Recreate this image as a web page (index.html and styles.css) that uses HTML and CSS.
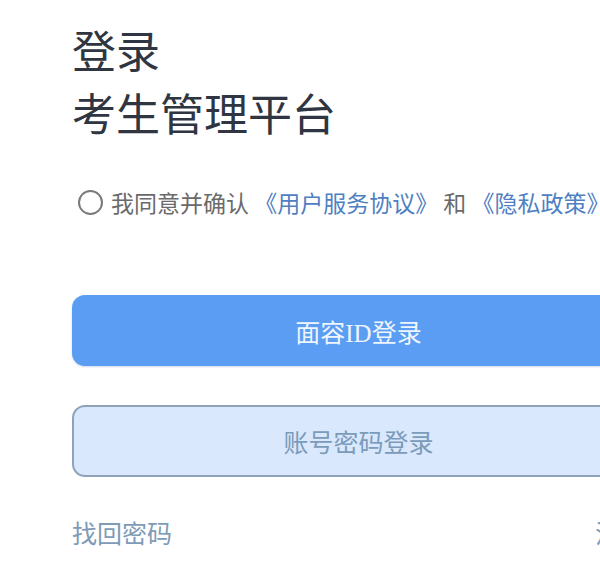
FILE: index.html
```html
<!DOCTYPE html>
<html lang="zh-CN">
<head>
<meta charset="utf-8">
<title>登录</title>
<link rel="stylesheet" href="styles.css">
</head>
<body>
<main class="page">
  <h1 class="title">
    <span class="title-line">登录</span>
    <span class="title-line">考生管理平台</span>
  </h1>
  <div class="agree">
    <span class="radio"></span>
    <span class="agree-text">我同意并确认 <a class="link">《用户服务协议》</a> 和 <a class="link">《隐私政策》</a></span>
  </div>
  <button class="btn btn-primary">面容ID登录</button>
  <button class="btn btn-secondary">账号密码登录</button>
  <div class="footer-links">
    <a class="foot-link">找回密码</a>
    <a class="foot-link">注册</a>
  </div>
</main>
</body>
</html>
```
FILE: styles.css
```css
html, body {
  margin: 0;
  padding: 0;
  background: #ffffff;
}
body {
  width: 600px;
  height: 563px;
  overflow: hidden;
  font-family: "Noto Sans CJK SC", "Noto Sans", sans-serif;
}
.page {
  width: 573px;
  padding: 18px 0 0 72px;
  display: flex;
  flex-direction: column;
}
.title {
  margin: 0;
  font-size: 44px;
  line-height: 63px;
  font-weight: 400;
  color: #2f3541;
  display: flex;
  flex-direction: column;
}
.agree {
  margin-top: 38px;
  height: 40px;
  display: flex;
  align-items: center;
  white-space: nowrap;
  font-size: 23px;
  color: #6a6a6a;
}
.radio {
  width: 21px;
  height: 21px;
  border: 2px solid #7a7a7a;
  border-radius: 50%;
  margin-left: 6px;
  margin-right: 8px;
  flex: none;
}
.link {
  color: #4f80c2;
}
.btn {
  display: flex;
  align-items: center;
  justify-content: center;
  width: 573px;
  box-sizing: border-box;
  border-radius: 13px;
  font-family: "Liberation Serif", "Noto Sans CJK SC", serif;
  font-size: 25px;
  padding: 0;
  margin-left: 0;
  margin-right: 0;
  margin-bottom: 0;
  cursor: pointer;
}
.btn-primary {
  margin-top: 73px;
  height: 71px;
  background: #5a9df3;
  color: #eef5ff;
  border: none;
  box-shadow: 0 1px 2px rgba(60, 100, 160, 0.25);
}
.btn-secondary {
  margin-top: 39px;
  height: 72px;
  background: #d9e8fc;
  color: #7b9bba;
  border: 2px solid #8ea3ba;
  font-family: "Noto Sans CJK SC", sans-serif;
}
.footer-links {
  margin-top: 37px;
  display: flex;
  justify-content: space-between;
  font-size: 25px;
  line-height: 36px;
  color: #7e9bb7;
}
.foot-link {
  color: #7e9bb7;
}
```
